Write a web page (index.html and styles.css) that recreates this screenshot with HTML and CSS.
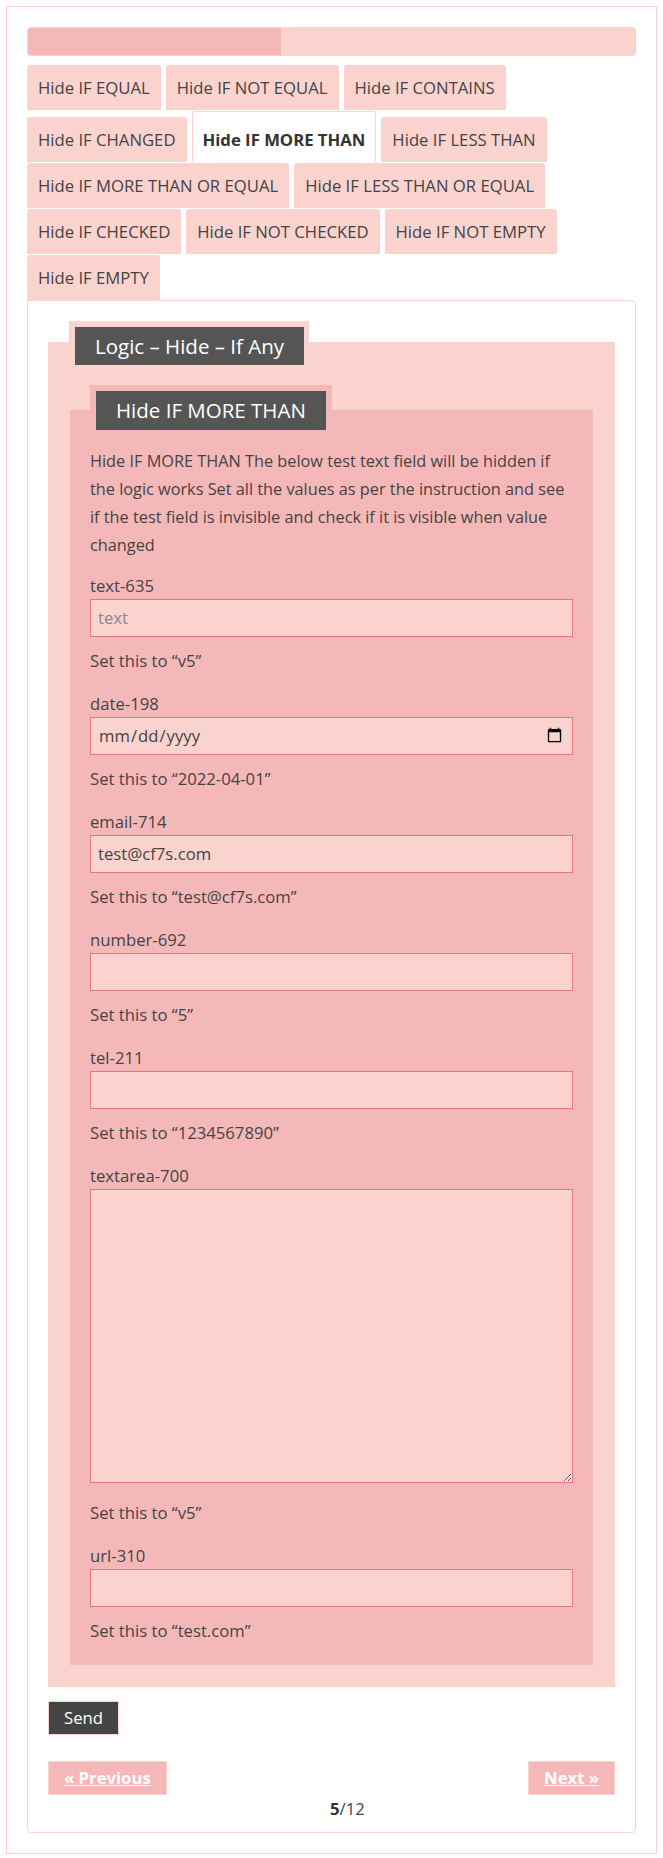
FILE: index.html
```html
<!DOCTYPE html>
<html lang="en">
<head>
    <meta charset="UTF-8">
    <meta name="viewport" content="width=device-width, initial-scale=1.0">
    <title>Logic – Hide – If Any</title>
    <link rel="stylesheet" href="styles.css">
</head>
<body>

    <div class="wrap">

        <!-- Progress (step 5 of 12) -->
        <div class="progress">
            <div class="progress-fill" style="width: 41.67%"></div>
        </div>

        <!-- Tabs -->
        <ul class="tabs">
            <li class="tab">Hide IF EQUAL</li>
            <li class="tab">Hide IF NOT EQUAL</li>
            <li class="tab">Hide IF CONTAINS</li>
            <li class="tab">Hide IF CHANGED</li>
            <li class="tab active">Hide IF MORE THAN</li>
            <li class="tab">Hide IF LESS THAN</li>
            <li class="tab">Hide IF MORE THAN OR EQUAL</li>
            <li class="tab">Hide IF LESS THAN OR EQUAL</li>
            <li class="tab">Hide IF CHECKED</li>
            <li class="tab">Hide IF NOT CHECKED</li>
            <li class="tab">Hide IF NOT EMPTY</li>
            <li class="tab">Hide IF EMPTY</li>
        </ul>

        <div class="panel">
            <form class="form" onsubmit="return false">
                <fieldset class="group">
                    <legend><span>Logic – Hide – If Any</span></legend>

                    <fieldset class="subgroup">
                        <legend><span>Hide IF MORE THAN</span></legend>

                        <p class="intro">Hide IF MORE THAN The below test text field will be hidden if the logic works Set all the values as per the instruction and see if the test field is invisible and check if it is visible when value changed</p>

                        <div class="field">
                            <label>text-635<input type="text" placeholder="text"></label>
                            <p class="hint">Set this to “v5”</p>
                        </div>

                        <div class="field">
                            <label>date-198<input type="date"></label>
                            <p class="hint">Set this to “2022-04-01”</p>
                        </div>

                        <div class="field">
                            <label>email-714<input type="email" value="test@cf7s.com"></label>
                            <p class="hint">Set this to “test@cf7s.com”</p>
                        </div>

                        <div class="field">
                            <label>number-692<input type="number"></label>
                            <p class="hint">Set this to “5”</p>
                        </div>

                        <div class="field">
                            <label>tel-211<input type="tel"></label>
                            <p class="hint">Set this to “1234567890”</p>
                        </div>

                        <div class="field">
                            <label>textarea-700<textarea></textarea></label>
                            <p class="hint">Set this to “v5”</p>
                        </div>

                        <div class="field">
                            <label>url-310<input type="url"></label>
                            <p class="hint">Set this to “test.com”</p>
                        </div>
                    </fieldset>
                </fieldset>

                <button class="send" type="submit">Send</button>

                <div class="pager">
                    <a class="pager-btn" href="#">« Previous</a>
                    <a class="pager-btn next" href="#">Next »</a>
                    <div class="pager-count"><b>5</b>/12</div>
                </div>
            </form>
        </div>

    </div>

</body>
</html>
```

FILE: styles.css
```css
body {
    margin: 6px;
    font-family: "Segoe UI", "Open Sans", sans-serif;
    font-size: 16.7px;
    color: #444;
    background: #fff;
}

.wrap {
    border: 1px solid #fad3cf;
    padding: 20px;
}

/* Progress bar */
.progress {
    height: 29px;
    box-sizing: border-box;
    padding: 1px;
    background: #fad3cf;
    border-radius: 4px;
}

.progress-fill {
    height: 100%;
    background: #f5b8b9;
    border-radius: 3px 0 0 3px;
}

/* Tabs */
.tabs {
    list-style: none;
    margin: 9px 0 0;
    padding: 0;
    display: flex;
    flex-wrap: wrap;
    align-items: flex-end;
    gap: 1px 5px;
}

.tab {
    background: #fad3cf;
    padding: 11px 11px;
    line-height: 23px;
    border-radius: 3px 3px 0 0;
    cursor: pointer;
}

.tab.active {
    background: #fff;
    border: 1px solid #fad3cf;
    border-bottom: 0;
    padding: 16px 10px 11px;
    font-weight: bold;
    color: #333;
}

/* Panel */
.panel {
    border: 1px solid #fad3cf;
    border-radius: 0 4px 4px 4px;
    padding: 20px 20px 9px;
}

fieldset {
    margin: 0;
    min-width: 0;
}

fieldset legend {
    padding: 6px;
}

fieldset legend span {
    display: block;
    background: #555;
    color: #fff;
    font-size: 20.5px;
    line-height: 26.4px;
    padding: 6px 20px;
}

.group {
    background: #fad3cf;
    border: 8px solid #fad3cf;
    padding: 14px;
}

.group > legend {
    background: #fad3cf;
    margin-left: -1px;
    padding-right: 5px;
}

.subgroup {
    background: #f5b8b9;
    border: 1px solid #f5b8b9;
    padding: 11px 19px 19px;
}

.subgroup > legend {
    background: #f5b8b9;
}

.intro {
    margin: 0 0 13px;
    font-size: 16.3px;
    line-height: 28px;
}

/* Fields */
.field label {
    display: block;
    line-height: 27px;
}

.field input,
.field textarea {
    display: block;
    width: 100%;
    box-sizing: border-box;
    height: 38px;
    margin: 0;
    padding: 0 7px;
    border: 1px solid #df7b7f;
    background: #fad3cf;
    font: inherit;
    color: #444;
}

.field input::placeholder {
    color: #888;
}

.field textarea {
    height: 294px;
    margin-bottom: 16px;
    padding: 6px 7px;
    resize: vertical;
}

.hint {
    margin: 10px 0 15px;
    line-height: 28px;
}

.field:last-child .hint {
    margin-bottom: 0;
}

/* Buttons */
.send {
    display: block;
    margin-top: 14px;
    background: #444;
    color: #fff;
    border: 1px solid #fad3cf;
    padding: 0 15px;
    font: inherit;
    line-height: 32px;
    cursor: pointer;
}

.pager {
    margin-top: 26px;
    display: grid;
    grid-template-columns: auto 1fr auto;
}

.pager-btn {
    background: #f5b8b9;
    color: #fff;
    border: 1px solid #fad3cf;
    padding: 0 15px;
    line-height: 32px;
    font-weight: bold;
    text-decoration: underline;
}

.pager-btn.next {
    grid-column: 3;
}

.pager-count {
    grid-column: 2;
    text-align: center;
    line-height: 28px;
}

.pager-count b {
    color: #333;
}
```
